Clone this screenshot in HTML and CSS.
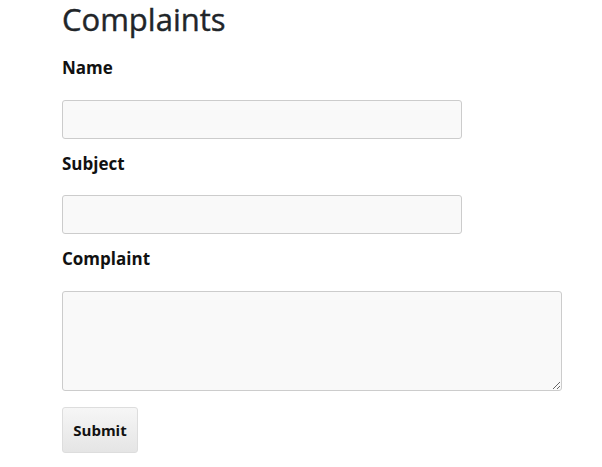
FILE: index.html
```html
<!DOCTYPE html>
<html>
<head>
<meta charset="utf-8">
<link rel="stylesheet" href="styles.css">
</head>
<body>
<main class="page">
  <h1 class="title">Complaints</h1>
  <form class="form">
    <label class="label" for="name">Name</label>
    <input class="field" id="name" type="text">
    <label class="label" for="subject">Subject</label>
    <input class="field" id="subject" type="text">
    <label class="label" for="complaint">Complaint</label>
    <textarea class="field area" id="complaint"></textarea>
    <button class="btn" type="button">Submit</button>
  </form>
</main>
</body>
</html>
```
FILE: styles.css
```css
html, body {
  margin: 0;
  padding: 0;
  background: #fff;
}
body {
  font-family: "Open Sans", "Noto Sans", sans-serif;
  color: #212529;
}
.page {
  padding: 0 62px;
}
.title {
  margin: 0;
  padding-top: 1px;
  font-size: 31px;
  font-weight: 400;
  line-height: 37px;
  -webkit-text-stroke: 0.4px #212529;
}
.form {
  display: flex;
  flex-direction: column;
  align-items: flex-start;
}
.label {
  font-size: 17px;
  font-weight: 700;
  line-height: 24px;
  color: #111;
}
.label:first-child {
  margin-top: 18px;
}
.field {
  box-sizing: border-box;
  width: 400px;
  height: 39px;
  margin: 19px 0 13px;
  background: #f9f9f9;
  border: 1px solid #ccc;
  border-radius: 3px;
  font: inherit;
}
.label:first-child + .field {
  margin-top: 20px;
}
.area {
  width: 500px;
  height: 100px;
  margin-top: 20px;
  margin-bottom: 16px;
  resize: both;
}
.btn {
  box-sizing: border-box;
  width: 76px;
  height: 46px;
  border: 1px solid #ddd;
  border-radius: 3px;
  background: linear-gradient(#f6f6f6, #e5e5e5);
  font-family: "Open Sans", "Noto Sans", sans-serif;
  font-size: 15px;
  font-weight: 700;
  color: #111;
  padding: 0;
}
```
